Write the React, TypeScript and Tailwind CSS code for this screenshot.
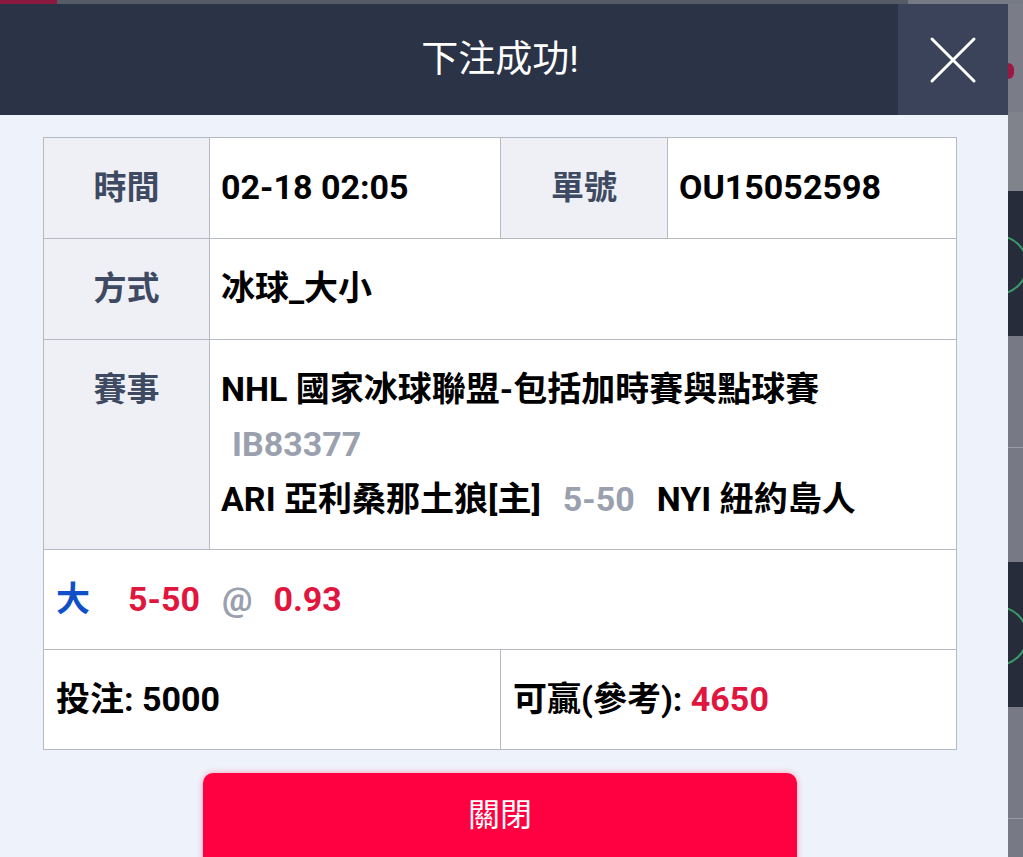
import { useState } from 'react';

const font = "font-['Roboto','Noto_Sans_CJK_TC',sans-serif]";

function CloseIcon() {
  return (
    <svg width="48" height="48" viewBox="0 0 48 48" fill="none">
      <path d="M3 3L45 45M45 3L3 45" stroke="#ffffff" strokeWidth="3" strokeLinecap="round" />
    </svg>
  );
}

function BackdropCard() {
  return (
    <div className="relative h-[145px] bg-[#262c3a]">
      <div className="absolute left-[-40px] top-[44px] h-[60px] w-[60px] rounded-full border-2 border-[#3c9a6a]" />
    </div>
  );
}

function Label({ children }: { children: React.ReactNode }) {
  return (
    <div className="border-r border-[#b6b9c1] bg-[#eff0f5] pt-[22px] text-center text-[33px] font-bold leading-[55px] text-[#3e4a62]">
      {children}
    </div>
  );
}

export default function App() {
  const [open, setOpen] = useState(true);

  return (
    <div className={`relative h-[857px] w-[1023px] overflow-hidden bg-[#777a85] ${font}`}>
      {/* dimmed page underneath */}
      <div className="flex h-[4px]">
        <div className="w-[57px] bg-[#8c1a40]" />
        <div className="flex-1 bg-[#565b68]" />
        <div className="w-[115px] bg-[#767a84]" />
      </div>
      <div className="ml-auto w-[15px]">
        <div className="relative h-[108px] bg-[#7a7d87]">
          <div className="absolute left-0 top-[59px] h-[16px] w-[6px] rounded-r-full bg-[#9c1842]" />
        </div>
        <div className="h-[79px] bg-[#80838c]" />
        <BackdropCard />
        <div className="h-[112px] border-b border-[#9a9da5] bg-[#777a85]" />
        <div className="h-[114px] bg-[#777a85]" />
        <BackdropCard />
        <div className="h-[112px] border-b border-[#9a9da5] bg-[#777a85]" />
      </div>

      {open && (
        <div className="absolute left-0 top-[4px] flex h-[853px] w-[1008px] flex-col bg-[#eef2fb]">
          <div className="relative flex h-[111px] shrink-0 items-center justify-center bg-[#2b3346]">
            <span className="pr-[8px] text-[37px] font-normal text-white">下注成功!</span>
            <button
              onClick={() => setOpen(false)}
              className="absolute right-0 top-0 flex h-[111px] w-[110px] items-center justify-center bg-[#3a4359]"
            >
              <CloseIcon />
            </button>
          </div>

          <div className="pl-[43px] pt-[22px]">
            <div className="w-[914px] border border-[#b6b9c1] bg-white text-[34px] font-bold leading-[55px] text-black">
              <div className="grid h-[101px] grid-cols-[166px_291px_167px_1fr] border-b border-[#b6b9c1]">
                <Label>時間</Label>
                <div className="border-r border-[#b6b9c1] px-[11px] pt-[22px]">02-18 02:05</div>
                <Label>單號</Label>
                <div className="px-[11px] pt-[22px]">OU15052598</div>
              </div>
              <div className="grid h-[101px] grid-cols-[166px_1fr] border-b border-[#b6b9c1]">
                <Label>方式</Label>
                <div className="px-[11px] pt-[22px]">冰球_大小</div>
              </div>
              <div className="grid h-[210px] grid-cols-[166px_1fr] border-b border-[#b6b9c1]">
                <Label>賽事</Label>
                <div className="px-[11px] pt-[22px]">
                  <div>NHL 國家冰球聯盟-包括加時賽與點球賽</div>
                  <div className="pl-[11px] text-[#9aa0ad]">IB83377</div>
                  <div>
                    ARI 亞利桑那土狼[主]
                    <span className="mx-[22px] text-[#9aa0ad]">5-50</span>
                    NYI 紐約島人
                  </div>
                </div>
              </div>
              <div className="flex h-[100px] items-start border-b border-[#b6b9c1] px-[12px] pt-[22px]">
                <span className="text-[#0f50c8]">大</span>
                <span className="ml-[38px] text-[#e0163f]">5-50</span>
                <span className="ml-[22px] text-[#9aa0ad]">@</span>
                <span className="ml-[21px] text-[#e0163f]">0.93</span>
              </div>
              <div className="grid h-[99px] grid-cols-[457px_1fr]">
                <div className="border-r border-[#b6b9c1] px-[12px] pt-[22px]">投注: 5000</div>
                <div className="px-[12px] pt-[22px]">
                  可贏(參考): <span className="text-[#e0163f]">4650</span>
                </div>
              </div>
            </div>

            <button
              onClick={() => setOpen(false)}
              className="ml-[160px] mt-[23px] flex h-[100px] w-[594px] items-start justify-center rounded-[10px] bg-[#ff0040] pt-[18px] text-[32px] font-normal text-white shadow-[0_0_6px_rgba(255,0,64,0.35)]"
            >
              關閉
            </button>
          </div>
        </div>
      )}
    </div>
  );
}
